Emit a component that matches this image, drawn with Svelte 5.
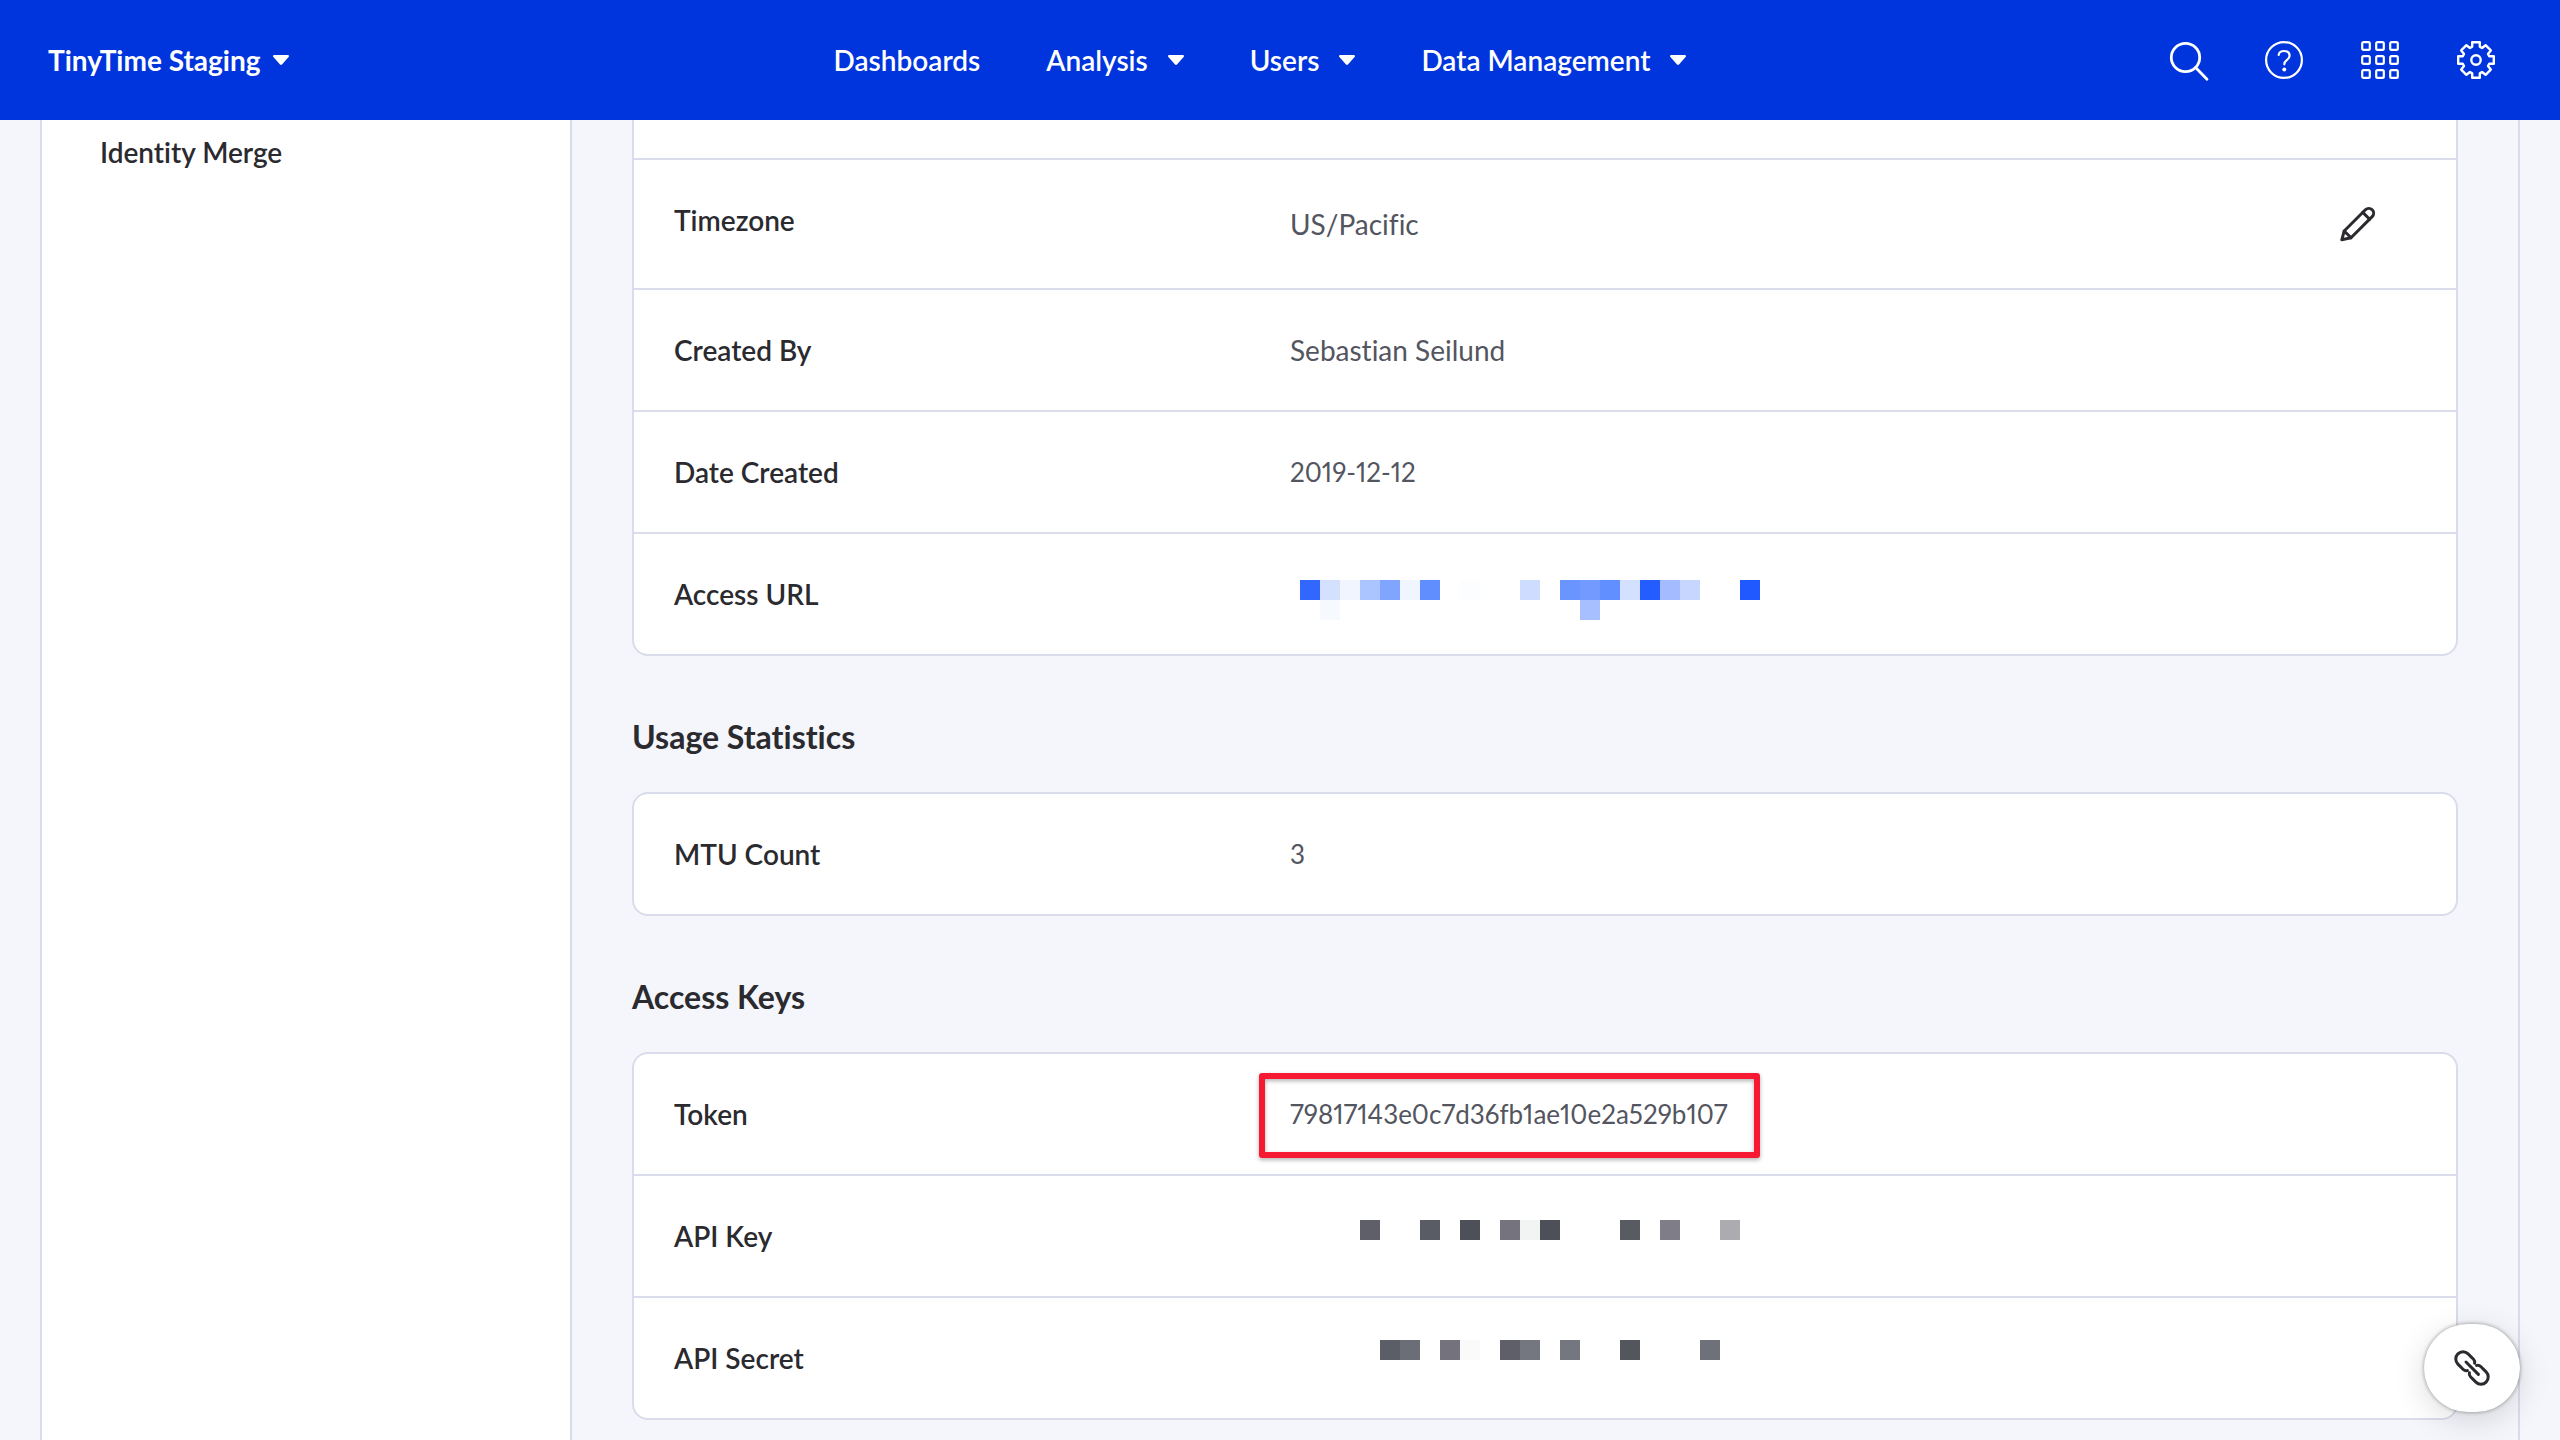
<script lang="ts">
  type Cell = [x: number, y: number, color: string];

  const nav = [
    { label: 'Dashboards', menu: false },
    { label: 'Analysis', menu: true },
    { label: 'Users', menu: true },
    { label: 'Data Management', menu: true },
  ];

  // masked values, drawn as 20px blocks
  const urlCells: Cell[] = [
    [10, 12, '#3167fd'], [30, 12, '#d3e1ff'], [50, 12, '#f0f5ff'], [70, 12, '#aac5ff'],
    [90, 12, '#80a5ff'], [110, 12, '#f0f5ff'], [130, 12, '#618eff'], [170, 12, '#fcfdff'],
    [230, 12, '#cddcff'], [270, 12, '#6a95ff'], [290, 12, '#739bff'], [310, 12, '#628fff'],
    [330, 12, '#d4e0ff'], [350, 12, '#245dff'], [370, 12, '#a4bcff'], [390, 12, '#c7d6ff'],
    [450, 12, '#1f59ff'], [30, 32, '#f6faff'], [290, 32, '#a7beff'],
  ];
  const keyCells: Cell[] = [
    [70, 10, '#5f5f69'], [130, 10, '#595c65'], [170, 10, '#4e5059'], [210, 10, '#75747e'],
    [230, 10, '#f2f4f4'], [250, 10, '#4e5059'], [330, 10, '#595b63'], [370, 10, '#7f7e88'],
    [430, 10, '#ababb0'],
  ];
  const secretCells: Cell[] = [
    [90, 8, '#5b5e66'], [110, 8, '#6b6e76'], [150, 8, '#74737d'], [170, 8, '#fafafa'],
    [210, 8, '#5f5f69'], [230, 8, '#74777f'], [270, 8, '#74777f'], [330, 8, '#54565e'],
    [410, 8, '#6e7179'],
  ];
</script>

{#snippet caret()}
  <svg class="caret" viewBox="0 0 16 10" aria-hidden="true">
    <path d="M1.4 0h13.2c1.2 0 1.8 1.2 1 2.1L9 9.5c-.6.6-1.4.6-2 0L.4 2.1C-.4 1.2.2 0 1.4 0z" />
  </svg>
{/snippet}

{#snippet masked(cells: Cell[])}
  <svg class="masked" viewBox="0 0 480 52" shape-rendering="crispEdges" role="img" aria-label="Hidden value">
    {#each cells as [x, y, color]}
      <rect {x} {y} width="20" height="20" fill={color} />
    {/each}
  </svg>
{/snippet}

<div class="page">
  <header class="topbar">
    <button class="project">TinyTime Staging {@render caret()}</button>
    <nav>
      {#each nav as item}
        {#if item.menu}
          <button class="nav-item">{item.label} {@render caret()}</button>
        {:else}
          <a class="nav-item" href="#dashboards">{item.label}</a>
        {/if}
      {/each}
    </nav>
    <div class="tools">
      <button class="icon" aria-label="Search">
        <svg viewBox="0 0 40 40" stroke-width="2.8">
          <circle cx="17.5" cy="17.5" r="14.2" />
          <path d="M27.6 27.6 39 39.3" />
        </svg>
      </button>
      <button class="icon" aria-label="Help">
        <svg viewBox="0 0 40 40" stroke-width="2.2">
          <circle cx="20" cy="20" r="17.9" />
          <path d="M14.7 14.8C15 12.5 17.2 11 20.1 11c3.3 0 5.5 1.8 5.5 4.7 0 4.3-5.3 4.1-5.3 8.6" />
          <circle class="dot" cx="20.3" cy="29.5" r="2" />
        </svg>
      </button>
      <button class="icon" aria-label="Apps">
        <svg viewBox="0 0 40 40" stroke-width="2.2">
          {#each [6, 20, 34] as cy}
            {#each [6, 20, 34] as cx}
              <rect x={cx - 3.8} y={cy - 3.8} width="7.6" height="7.6" rx="1.4" />
            {/each}
          {/each}
        </svg>
      </button>
      <button class="icon" aria-label="Settings">
        <svg viewBox="0 0 40 40" stroke-width="2.4">
          <path
            d="M16.2 2.2H23.8V6.8L26 8 29.6 5.2 34.8 10.4 32 14 33.2 16.2H37.8V23.8H33.2L32 26 34.8 29.6 29.6 34.8 26 32 23.8 33.2V37.8H16.2V33.2L14 32 10.4 34.8 5.2 29.6 8 26 6.8 23.8H2.2V16.2H6.8L8 14 5.2 10.4 10.4 5.2 14 8 16.2 6.8Z"
          />
          <circle cx="20" cy="20" r="4.7" />
        </svg>
      </button>
    </div>
  </header>

  <div class="frame">
    <aside>
      <a href="#identity-merge">Identity Merge</a>
    </aside>

    <main>
      <dl class="card card-open">
        <div class="row row-tail"></div>
        <div class="row">
          <dt>Timezone</dt>
          <dd class="editable">
            US/Pacific
            <button class="icon edit" aria-label="Edit timezone">
              <svg viewBox="0 0 40 40" stroke-width="3">
                <path d="M3.8 35.8 6.2 27 27.4 5.8a4.7 4.7 0 0 1 6.8 6.8L13 33.8Z" />
                <path d="M6.2 27 13 33.8M24.8 8.4 31.6 15.2" />
              </svg>
            </button>
          </dd>
        </div>
        <div class="row">
          <dt>Created By</dt>
          <dd>Sebastian Seilund</dd>
        </div>
        <div class="row">
          <dt>Date Created</dt>
          <dd class="code">2019-12-12</dd>
        </div>
        <div class="row">
          <dt>Access URL</dt>
          <dd>{@render masked(urlCells)}</dd>
        </div>
      </dl>

      <h2>Usage Statistics</h2>
      <dl class="card">
        <div class="row">
          <dt>MTU Count</dt>
          <dd class="code">3</dd>
        </div>
      </dl>

      <h2>Access Keys</h2>
      <dl class="card">
        <div class="row">
          <dt>Token</dt>
          <dd class="code marked">79817143e0c7d36fb1ae10e2a529b107</dd>
        </div>
        <div class="row">
          <dt>API Key</dt>
          <dd>{@render masked(keyCells)}</dd>
        </div>
        <div class="row">
          <dt>API Secret</dt>
          <dd>{@render masked(secretCells)}</dd>
        </div>
      </dl>
    </main>
  </div>

  <button class="icon copy-link" aria-label="Copy link">
    <svg viewBox="0 0 40 40" stroke-width="3">
      <path d="M22.6 15.2C23 13.4 22.6 12.4 21.5 11.3L16.1 5.9A7.2 7.2 0 0 0 5.9 16.1L11.3 21.5C12.4 22.6 13.6 23 15.4 22.6" />
      <path d="M17.4 24.8C17 26.6 17.4 27.6 18.5 28.7L23.9 34.1A7.2 7.2 0 0 0 34.1 23.9L28.7 18.5C27.6 17.4 26.4 17 24.6 17.4" />
      <path d="M14 14 26.4 26.4" />
    </svg>
  </button>
</div>

<style>
  :global(body) {
    background: #f4f6fb;
  }
  .page {
    display: flex;
    flex-direction: column;
    min-height: 100vh;
    color: #2a2a2f;
    font-family: Lato, 'Open Sans', sans-serif;
    font-size: 28px;
    line-height: 40px;
    font-variant-ligatures: none;
  }
  button {
    padding: 0;
    border: 0;
    background: none;
    color: inherit;
    font: inherit;
    cursor: pointer;
  }
  a {
    color: inherit;
    text-decoration: none;
  }

  .topbar {
    display: grid;
    grid-template-columns: 1fr auto 1fr;
    align-items: center;
    height: 120px;
    padding: 0 64px 0 48px;
    background: #0034dc;
    color: #fff;
  }
  .project {
    display: flex;
    align-items: center;
    gap: 12px;
    font-weight: 700;
  }
  nav {
    display: flex;
    gap: 66px;
    padding-right: 24px;
  }
  .nav-item {
    display: flex;
    align-items: center;
    gap: 20px;
    font-weight: 600;
  }
  .caret {
    width: 16px;
    height: 10px;
    fill: #fff;
  }
  .tools {
    display: flex;
    justify-content: flex-end;
    gap: 56px;
  }
  .icon {
    display: flex;
  }
  .icon svg {
    width: 40px;
    height: 40px;
    overflow: visible;
    fill: none;
    stroke: currentColor;
    stroke-linecap: round;
    stroke-linejoin: round;
  }
  .icon .dot {
    fill: currentColor;
    stroke: none;
  }

  .frame {
    flex: 1;
    display: flex;
    margin: 0 40px;
    border: solid #dadceb;
    border-width: 0 2px;
  }
  aside {
    flex: 0 0 530px;
    box-sizing: border-box;
    padding: 12px 0 0 58px;
    border-right: 2px solid #dadceb;
    background: #fff;
    font-weight: 600;
  }
  main {
    flex: 1;
    min-width: 0;
    padding: 0 60px 20px;
  }
  h2 {
    margin: 0;
    padding: 59px 0 33px;
    font-size: 32px;
    line-height: 44px;
    font-weight: 700;
  }
  .card {
    margin: 0;
    border: 2px solid #dadceb;
    border-radius: 16px;
    background: #fff;
  }
  .card-open {
    border-top: 0;
    border-radius: 0 0 16px 16px;
  }
  .row {
    display: grid;
    grid-template-columns: minmax(240px, 616px) 1fr;
    padding: 40px;
  }
  .row + .row {
    border-top: 2px solid #dadceb;
  }
  .row-tail {
    height: 38px;
    padding: 0;
  }
  dt {
    font-weight: 600;
  }
  dd {
    display: flex;
    align-items: center;
    height: 40px;
    margin: 0;
    color: #53555f;
  }
  .code {
    font-size: 26px;
    font-variant-numeric: proportional-nums;
  }
  .editable {
    justify-content: space-between;
    height: 48px;
  }
  .edit {
    padding-right: 38px;
    color: #2a2a2f;
  }
  .masked {
    flex: none;
    width: 480px;
    height: 52px;
  }
  .marked {
    position: relative;
  }
  .marked::after {
    content: '';
    position: absolute;
    top: -21px;
    left: -31px;
    box-sizing: border-box;
    width: 501px;
    height: 85px;
    border: 6px solid #f71932;
    border-radius: 3px;
    filter: drop-shadow(0 2px 2px rgba(0, 0, 0, 0.3));
  }

  .copy-link {
    position: fixed;
    right: 40px;
    bottom: 28px;
    align-items: center;
    justify-content: center;
    width: 96px;
    height: 88px;
    border-radius: 44px;
    background: #fff;
    box-shadow: 0 0 4px rgba(0, 0, 0, 0.4), 0 8px 32px rgba(0, 0, 0, 0.14);
  }
</style>
